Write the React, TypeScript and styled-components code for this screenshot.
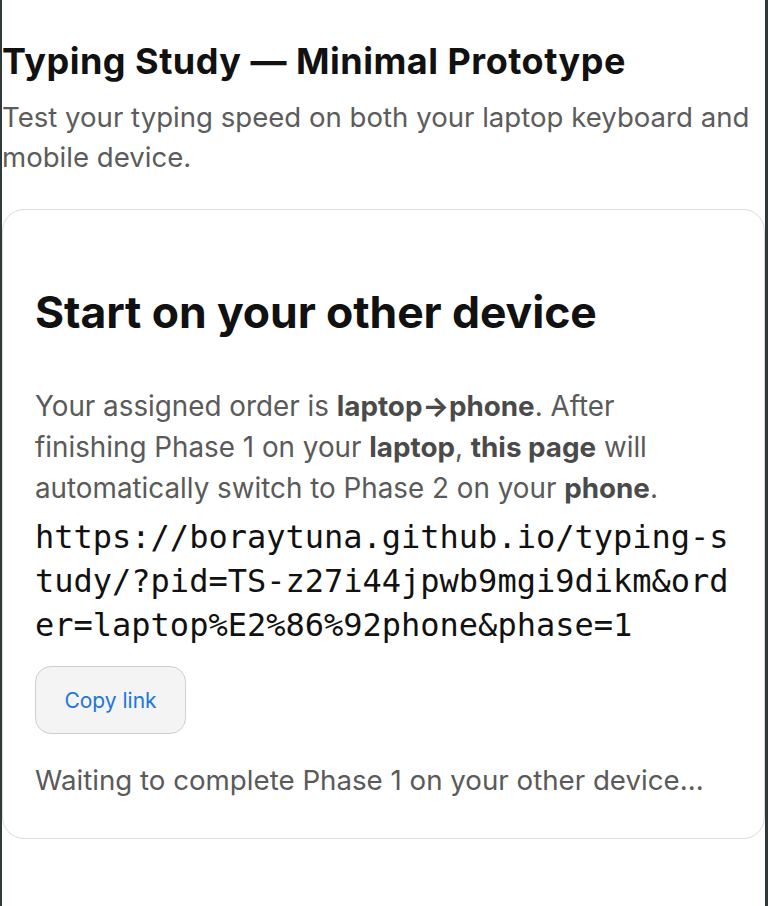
import React from "react";
import styled, { createGlobalStyle } from "styled-components";

const Global = createGlobalStyle`
  html, body { margin: 0; padding: 0; background: #ffffff; }
  body { font-family: Inter, "Noto Sans", "Liberation Sans", sans-serif; }
`;

const Frame = styled.div`
  min-height: 906px;
  box-sizing: border-box;
  border-left: 2px solid #2f3b3a;
  border-right: 3px solid #2f3b3a;
  padding-top: 39px;
  background: #fff;
`;

const Title = styled.h1`
  margin: 0;
  font-size: 36px;
  line-height: 44px;
  font-weight: 700;
  color: #111;
  letter-spacing: 0.5px;
`;

const Subtitle = styled.p`
  margin: 14px 0 0 0;
  font-size: 27.6px;
  line-height: 40px;
  color: #5c5c5c;
`;

const Card = styled.section`
  margin: 32px 0 0 0;
  border: 1.5px solid #dcdcdc;
  border-radius: 22px;
  padding: 76px 32px 37px 32px;
`;

const CardHeading = styled.h2`
  margin: 0 0 48px 0;
  font-size: 44.5px;
  line-height: 52px;
  font-weight: 700;
  color: #111;
  letter-spacing: -0.1px;
`;

const Body = styled.p`
  margin: 0;
  max-width: 660px;
  font-size: 27.8px;
  line-height: 41px;
  color: #5a5a5a;
`;

const Strong = styled.strong`
  font-weight: 700;
  color: #4a4a4a;
`;

const Url = styled.div`
  margin-top: 6px;
  font-family: "DejaVu Sans Mono", "Liberation Mono", monospace;
  font-size: 32px;
  line-height: 44px;
  color: #111;
  word-break: break-all;
`;

const CopyButton = styled.button`
  margin-top: 19px;
  width: 151px;
  height: 68px;
  border: 1.5px solid #cfcfcf;
  border-radius: 16px;
  background: #f4f4f4;
  color: #1c77d8;
  font-family: Inter, "Noto Sans", sans-serif;
  font-size: 21px;
  cursor: pointer;
`;

const Waiting = styled.p`
  margin: 26px 0 0 0;
  font-size: 27.7px;
  line-height: 41px;
  color: #5a5a5a;
`;

export default function App() {
  return (
    <>
      <Global />
      <Frame>
        <Title>Typing Study — Minimal Prototype</Title>
        <Subtitle>
          Test your typing speed on both your laptop keyboard and mobile device.
        </Subtitle>
        <Card>
          <CardHeading>Start on your other device</CardHeading>
          <Body>
            Your assigned order is <Strong>laptop→phone</Strong>. After finishing
            Phase 1 on your <Strong>laptop</Strong>, <Strong>this page</Strong> will
            automatically switch to Phase 2 on your <Strong>phone</Strong>.
          </Body>
          <Url>
            https://boraytuna.github.io/typing-study/?pid=TS-z27i44jpwb9mgi9dikm&amp;order=laptop%E2%86%92phone&amp;phase=1
          </Url>
          <CopyButton>Copy link</CopyButton>
          <Waiting>Waiting to complete Phase 1 on your other device…</Waiting>
        </Card>
      </Frame>
    </>
  );
}
